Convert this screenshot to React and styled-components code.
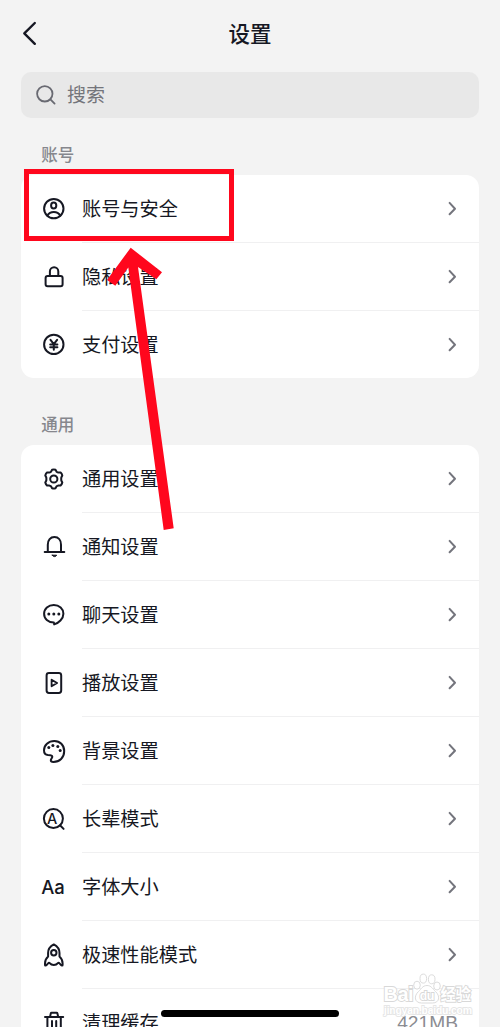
import React from 'react';
import styled, { createGlobalStyle } from 'styled-components';

const GlobalStyle = createGlobalStyle`
  * {
    box-sizing: border-box;
  }

  body {
    margin: 0;
    background: #f3f3f3;
    font-family: 'Noto Sans CJK SC', sans-serif;
    color: #161823;
  }
`;

const Icon = ({ children }) => (
  <IconSvg viewBox="0 0 24 25">{children}</IconSvg>
);

const UserIcon = () => (
  <Icon>
    <circle cx="11.8" cy="12.6" r="9.7" />
    <ellipse cx="11.7" cy="9.6" rx="2.6" ry="3" />
    <path d="M5.4 19.6C7 16.7 9.2 15.9 11.8 15.9s4.8.8 6.4 3.7" />
  </Icon>
);

const LockIcon = () => (
  <Icon>
    <rect x="3.6" y="12" width="17" height="10.2" rx="2" />
    <path d="M7.900 12V7.500a4.200 4.200 0 0 1 8.400 0V12" />
  </Icon>
);

const YenIcon = () => (
  <Icon>
    <circle cx="11.8" cy="12.4" r="9.7" />
    <path d="M8.5 7.8l3.3 4.4 3.3-4.4M11.8 12.2v5.6M8.2 12.4h7.2M8.2 15.2h7.2" />
  </Icon>
);

const GearIcon = () => (
  <Icon>
    <g transform="translate(11.8 13)">
      <path d="M-1.7-9.200q1.700-.5 3.400 0l1.100 1.900q.9.700 1.900.9l2.100-.1q1.300 1.200 1.700 3L7.500-1.500q-.2 1.500 0 3L8.500 3.500q-.4 1.800-1.700 3l-2.100-.1q-1 .2-1.900.9L1.700 9.200q-1.700.5-3.400 0l-1.100-1.900q-.9-.7-1.900-.9l-2.100.1q-1.300-1.200-1.700-3L-7.500 1.500q.2-1.500 0-3L-8.500-3.500q.4-1.800 1.700-3l2.100.1q1-.2 1.900-.9z" />
      <circle r="3.6" />
    </g>
  </Icon>
);

const BellIcon = () => (
  <Icon>
    <path d="M5.8 18v-7.3C5.8 6.2 8.4 3.1 12.4 3.1S19 6.2 19 10.7V18M2.7 18h19.6" />
    <path d="M10.3 21.2h4.4q-.8 1.4-2.2 1.4t-2.2-1.4z" fill="#161823" strokeWidth="1" />
  </Icon>
);

const ChatIcon = () => (
  <Icon>
    <path d="M11.9 20.6C6 20.6 2.1 16.8 2.1 11.8S6.3 3 11.8 3s9.600 3.800 9.600 8.700c0 5.300-4.800 9.400-9.200 10.700z" />
    <g fill="#161823" stroke="none">
      <circle cx="6.8" cy="12" r="1.5" />
      <circle cx="11.8" cy="12" r="1.5" />
      <circle cx="16.8" cy="12" r="1.5" />
    </g>
  </Icon>
);

const PlayIcon = () => (
  <Icon>
    <rect x="4.6" y="3" width="14.6" height="20" rx="2.4" />
    <path d="M9.6 9.7l5.5 3.3-5.5 3.3z" strokeWidth="1.8" />
  </Icon>
);

const PaletteIcon = () => (
  <Icon>
    <path d="M12.4 2.9C6.4 2.9 2 7.1 2 12.2c0 3 1.6 4.700 4 4.800 2 0 4.300 0 4.300 1.700 0 1.400-1.500 2.300-1.500 3.600 0 1.100 1.100 1.600 2.600 1.600C17.600 23.900 22.200 19.600 22.200 13c0-6-4.300-10.100-9.800-10.100z" />
    <g fill="#161823" stroke="none">
      <circle cx="6.8" cy="9.6" r="1.5" />
      <circle cx="10.9" cy="7.4" r="1.5" />
      <circle cx="15.8" cy="8.4" r="1.5" />
      <circle cx="18.2" cy="12.6" r="1.5" />
    </g>
  </Icon>
);

const ElderIcon = () => (
  <Icon>
    <circle cx="11.4" cy="12.6" r="9.5" />
    <path d="M18 19.200l3.600 3.700" />
    <IconLetter x="10.2" y="18.2">A</IconLetter>
  </Icon>
);

const RocketIcon = () => (
  <Icon>
    <path d="M11.8 2.4C8.6 4.1 6.1 7.3 6.1 11v3.6C3.9 16.6 3 19 3 21.4v1.5c0 .8 1 .9 1.5.3l1.8-2c.4-.5 1-.5 1.4 0 .9 1.1 2.3 1.8 4.1 1.8s3.2-.7 4.1-1.8c.4-.5 1-.5 1.4 0l1.8 2c.5.6 1.5.5 1.5-.3v-1.5c0-2.4-.9-4.8-3.1-6.8V11c0-3.7-2.5-6.9-5.7-8.6z" />
    <circle cx="11.8" cy="10.7" r="2.7" />
  </Icon>
);

const TrashIcon = () => (
  <Icon>
    <path d="M3 7h18.2M8 7l.8-3.6q.2-.6.8-.6h5q.6 0 .8.6L16.2 7M5.4 7v14.6q0 2 2 2h9.4q2 0 2-2V7M10 11v8M14.2 11v8" />
  </Icon>
);

const FontIcon = () => <FontGlyph>Aa</FontGlyph>;

const ChevronIcon = () => (
  <ChevronSvg viewBox="0 0 9 15">
    <path d="M1.6 1.9L7 7.700l-5.400 5.600" />
  </ChevronSvg>
);

const accountItems = [
  { label: '账号与安全', icon: UserIcon },
  { label: '隐私设置', icon: LockIcon },
  { label: '支付设置', icon: YenIcon },
];

const generalItems = [
  { label: '通用设置', icon: GearIcon },
  { label: '通知设置', icon: BellIcon },
  { label: '聊天设置', icon: ChatIcon },
  { label: '播放设置', icon: PlayIcon },
  { label: '背景设置', icon: PaletteIcon },
  { label: '长辈模式', icon: ElderIcon },
  { label: '字体大小', icon: FontIcon },
  { label: '极速性能模式', icon: RocketIcon },
  { label: '清理缓存', icon: TrashIcon, value: '421MB' },
];

const SettingsGroup = ({ title, items }) => (
  <Group>
    <GroupTitle>{title}</GroupTitle>
    <Card>
      {items.map(({ label, icon: ItemIcon, value }, i) => (
        <Row key={label}>
          <ItemIcon />
          <RowBody $last={i === items.length - 1}>
            <RowLabel>{label}</RowLabel>
            {value ? <RowValue>{value}</RowValue> : <ChevronIcon />}
          </RowBody>
        </Row>
      ))}
    </Card>
  </Group>
);

const Watermark = () => (
  <WatermarkSvg viewBox="0 0 96 50">
    <WatermarkText x="3.5" y="29.5" $size={20} textLength="30">Bai</WatermarkText>
    <ellipse cx="43.3" cy="7.600" rx="3.300" ry="4.500" />
    <ellipse cx="51.7" cy="8.300" rx="3.300" ry="4.500" />
    <ellipse cx="37" cy="14.200" rx="3.300" ry="4" />
    <ellipse cx="57" cy="15" rx="3.300" ry="4" />
    <path d="M47 14.500c-4.500 0-5.500 3.500-8.500 6c-5 4.500-4 11.500 3 11.500h11c7 0 8-7 3-11.500c-3-2.500-4-6-8.500-6z" />
    <WatermarkText x="39.800" y="28.500" $size={12.5} textLength="14.500">du</WatermarkText>
    <WatermarkText x="60.500" y="29" $size={15.5} textLength="30.500">经验</WatermarkText>
    <WatermarkText x="4" y="42.500" $size={10.5} $faint textLength="88">jingyan.baidu.com</WatermarkText>
  </WatermarkSvg>
);

const App = () => {
  return (
    <Screen>
      <GlobalStyle />
      <Header>
        <BackSvg viewBox="0 0 16 26">
          <path d="M13.8 3L3.300 13.300l10.500 10.500" />
        </BackSvg>
        <Title>设置</Title>
      </Header>
      <SearchBar>
        <SearchSvg viewBox="0 0 22 22">
          <circle cx="9.800" cy="9.800" r="7.700" />
          <path d="M15.400 15.400l4.200 4.200" />
        </SearchSvg>
        <SearchHint>搜索</SearchHint>
      </SearchBar>
      <SettingsGroup title="账号" items={accountItems} />
      <SettingsGroup title="通用" items={generalItems} />

      <Highlight />
      <ArrowSvg viewBox="0 0 60 286">
        <path d="M27.700 2.700L59 27.300l-5.700 7L35 22l35.700 261.300-10 1.700L25.300 22.500l-13 18.200L4 35z" />
      </ArrowSvg>
      <Watermark />
      <HomeIndicator />
    </Screen>
  );
};

const Screen = styled.div`
  position: relative;
  height: 1027px;
  overflow: hidden;
  padding: 0 20.75px;
  background: #f3f3f3;
`;

const Header = styled.header`
  display: grid;
  grid-template-columns: 40px 1fr 40px;
  align-items: center;
  height: 72px;
  padding-bottom: 7px;
`;

const Title = styled.h1`
  margin: 0;
  font-size: 21.5px;
  line-height: 32px;
  font-weight: 500;
  text-align: center;
`;

const BackSvg = styled.svg`
  width: 16px;
  height: 26px;
  margin-left: 0;
  fill: none;
  stroke: #161823;
  stroke-width: 2.4;
  stroke-linecap: round;
  stroke-linejoin: round;
`;

const SearchBar = styled.div`
  display: flex;
  align-items: center;
  gap: 10px;
  height: 46px;
  padding: 0 14.25px;
  border-radius: 10px;
  background: #e8e8e8;
  color: #74757b;
  font-size: 19px;
`;

const SearchHint = styled.span`
  line-height: 28px;
  padding-bottom: 2px;
`;

const SearchSvg = styled.svg`
  width: 22px;
  height: 22px;
  fill: none;
  stroke: #696a72;
  stroke-width: 1.8;
  stroke-linecap: round;
`;

const Group = styled.section`
  &:nth-of-type(2) {
    margin-top: 10px;
  }
`;

const GroupTitle = styled.h2`
  display: flex;
  align-items: flex-end;
  height: 57px;
  margin: 0;
  padding: 0 20.5px 9.5px;
  color: #86878d;
  font-size: 16.5px;
  line-height: 24px;
  font-weight: 500;
`;

const Card = styled.div`
  border-radius: 13px;
  background: #fff;
`;

const Row = styled.div`
  display: flex;
  gap: 16px;
  padding-left: 21.25px;
`;

const RowBody = styled.div`
  display: flex;
  flex: 1;
  align-items: center;
  justify-content: space-between;
  height: ${({ $last }) => ($last ? '67px' : '68px')};
  padding-right: 21.25px;
  border-bottom: ${({ $last }) => ($last ? 'none' : '1px solid #f0f0f1')};
`;

const RowLabel = styled.span`
  padding-bottom: 2px;
  font-size: 19.2px;
  line-height: 28px;
`;

const RowValue = styled.span`
  color: #8b8c92;
  font-family: 'Liberation Sans', sans-serif;
  font-size: 19.2px;
`;

const IconSvg = styled.svg`
  flex: none;
  width: 24px;
  height: 25px;
  margin-top: 21px;
  fill: none;
  stroke: #161823;
  stroke-width: 2;
  stroke-linecap: round;
  stroke-linejoin: round;
`;

const IconLetter = styled.text`
  fill: #161823;
  stroke: none;
  font-family: Inter, sans-serif;
  font-size: 14.5px;
  font-weight: 500;
  text-anchor: middle;
`;

const FontGlyph = styled.span`
  flex: none;
  width: 24px;
  margin-left: -0.75px;
  margin-right: 0.75px;
  padding-top: 1px;
  font-family: Inter, sans-serif;
  font-size: 18.5px;
  font-weight: 500;
  line-height: 67px;
`;

const ChevronSvg = styled.svg`
  width: 9px;
  height: 15px;
  margin-right: 1px;
  fill: none;
  stroke: #74757d;
  stroke-width: 2;
  stroke-linecap: round;
  stroke-linejoin: round;
`;

const Highlight = styled.div`
  position: absolute;
  top: 169px;
  left: 24px;
  width: 210px;
  height: 72px;
  border: 5px solid #ff071d;
`;

const ArrowSvg = styled.svg`
  position: absolute;
  top: 245px;
  left: 103px;
  width: 60px;
  height: 286px;
  overflow: visible;
  fill: #ff071d;
`;

const WatermarkSvg = styled.svg`
  position: absolute;
  top: 971px;
  left: 380px;
  width: 96px;
  height: 50px;
  fill: #fff;
  stroke: #dcdcdc;
  stroke-width: 1;
`;

const WatermarkText = styled.text`
  font-family: 'Liberation Sans', 'Noto Sans CJK SC', sans-serif;
  font-size: ${({ $size }) => $size}px;
  font-weight: 700;
  paint-order: stroke;
  stroke: ${({ $faint }) => ($faint ? '#e6e6e6' : '#d8d8d8')};
  stroke-width: 1.8;
`;

const HomeIndicator = styled.div`
  position: absolute;
  top: 1010px;
  left: 161px;
  width: 178px;
  height: 7px;
  border-radius: 4px;
  background: #000;
`;

export default App;
